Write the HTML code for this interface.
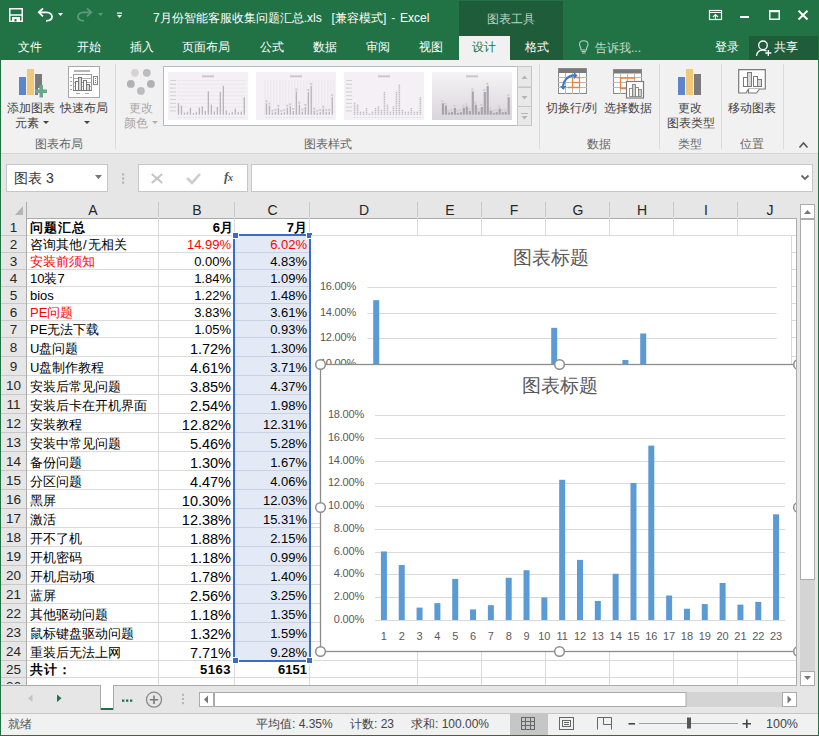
<!DOCTYPE html><html><head><meta charset="utf-8"><style>
html,body{margin:0;padding:0;}
body{width:819px;height:736px;overflow:hidden;position:relative;background:#e6e6e6;font-family:"Liberation Sans",sans-serif;}
div,svg{position:absolute;box-sizing:border-box;}
.t{white-space:nowrap;line-height:1;}
</style></head><body>
<div style="left:0px;top:0px;width:819px;height:60px;background:#217346"></div>
<div style="left:459px;top:1px;width:104px;height:59px;background:#1e5c3a"></div>
<div class="t" style="left:487px;top:12.5px;color:#b9d3c3;font-size:12px;">图表工具</div>
<div class="t" style="left:153px;top:12px;color:#fff;font-size:12px;word-spacing:1.6px;">7月份智能客服收集问题汇总.xls&nbsp;&nbsp;[兼容模式] - Excel</div>
<div class="t" style="left:18px;top:41px;color:#fff;font-size:12px;">文件</div>
<div class="t" style="left:77px;top:41px;color:#fff;font-size:12px;">开始</div>
<div class="t" style="left:130px;top:41px;color:#fff;font-size:12px;">插入</div>
<div class="t" style="left:182px;top:41px;color:#fff;font-size:12px;">页面布局</div>
<div class="t" style="left:260px;top:41px;color:#fff;font-size:12px;">公式</div>
<div class="t" style="left:313px;top:41px;color:#fff;font-size:12px;">数据</div>
<div class="t" style="left:366px;top:41px;color:#fff;font-size:12px;">审阅</div>
<div class="t" style="left:419px;top:41px;color:#fff;font-size:12px;">视图</div>
<div style="left:459px;top:36px;width:51px;height:24px;background:#f1f1f1"></div>
<div class="t" style="left:472px;top:41px;color:#217346;font-size:12px;">设计</div>
<div class="t" style="left:525px;top:41px;color:#fff;font-size:12px;">格式</div>
<div class="t" style="left:595px;top:41.5px;color:#c5dccd;font-size:12px;">告诉我...</div>
<div class="t" style="left:715px;top:41px;color:#fff;font-size:12px;">登录</div>
<div style="left:749px;top:36px;width:69px;height:24px;background:#1e5c3a"></div>
<div class="t" style="left:774px;top:41px;color:#fff;font-size:12px;">共享</div>
<svg style="left:0;top:0" width="819" height="60"><path d="M9.75 8.75 H22.25 V21.25 H9.75 Z" fill="none" stroke="#fff" stroke-width="1.5"/><line x1="9" x2="23" y1="15" y2="15" stroke="#fff" stroke-width="1.5"/><rect x="12" y="17" width="8" height="4.5" fill="#fff"/><rect x="14.5" y="19" width="2" height="2.5" fill="#217346"/><path d="M39 12.3 H46.5 C50 12.3 52 14.5 52 16.8 C52 19.3 49.8 20.8 46 20.8" fill="none" stroke="#fff" stroke-width="1.8"/><polyline points="43,8.3 38.8,12.3 43,16.3" fill="none" stroke="#fff" stroke-width="1.8"/><polygon points="58,13 63,13 60.5,16" fill="#fff"/><path d="M91 12.3 H83.5 C80 12.3 78 14.5 78 16.8 C78 19.3 80.2 20.8 84 20.8" fill="none" stroke="#5f9a78" stroke-width="1.8"/><polyline points="87,8.3 91.2,12.3 87,16.3" fill="none" stroke="#5f9a78" stroke-width="1.8"/><polygon points="98,13 103,13 100.5,16" fill="#5f9a78"/><rect x="117" y="12.5" width="5" height="1.2" fill="#fff"/><polygon points="117,15 122,15 119.5,18" fill="#fff"/><rect x="709.5" y="10.5" width="12" height="9" fill="none" stroke="#fff" stroke-width="1.2"/><line x1="709.5" x2="721.5" y1="12.5" y2="12.5" stroke="#fff" stroke-width="1"/><polyline points="713,17 715.5,14.5 718,17" fill="none" stroke="#fff" stroke-width="1.1"/><line x1="715.5" x2="715.5" y1="15" y2="19.5" stroke="#fff" stroke-width="1.1"/><rect x="740" y="16" width="9" height="2" fill="#fff"/><rect x="769.75" y="10.75" width="9.5" height="8.5" fill="none" stroke="#fff" stroke-width="1.5"/><rect x="769" y="10" width="11" height="2.2" fill="#fff"/><path d="M798.5 10.8 L807.5 19.5 M807.5 10.8 L798.5 19.5" stroke="#fff" stroke-width="1.9"/><path d="M581 50 C581 47 579.5 46 579.5 44.5 C579.5 42 581.5 40.8 583.7 40.8 C586 40.8 588 42 588 44.5 C588 46 586.5 47 586.5 50 Z" fill="none" stroke="#b4cfbf" stroke-width="1.1"/><rect x="581.5" y="51" width="4.5" height="1" fill="#b4cfbf"/><rect x="582" y="52.5" width="3.5" height="1" fill="#b4cfbf"/><circle cx="763" cy="45.3" r="4.3" fill="none" stroke="#fff" stroke-width="1.3"/><path d="M756.5 56 C757 51.5 759.5 50 763 50 C764.5 50 765.5 50.3 766.5 50.8" fill="none" stroke="#fff" stroke-width="1.3"/><path d="M768.3 50 V56 M765.3 53 H771.3" stroke="#fff" stroke-width="1.3"/></svg>
<div style="left:1px;top:60px;width:817px;height:94px;background:#f1f1f1;border-bottom:1px solid #d5d5d5"></div>
<div class="t" style="left:7px;top:102px;font-size:12px;color:#444444;">添加图表</div>
<div class="t" style="left:15px;top:117px;font-size:12px;color:#444444;">元素</div>
<div class="t" style="left:60px;top:102px;font-size:12px;color:#444444;">快速布局</div>
<div class="t" style="left:34.5px;top:137.5px;font-size:12px;color:#666666;">图表布局</div>
<div class="t" style="left:129px;top:102px;font-size:12px;color:#a8a8a8;">更改</div>
<div class="t" style="left:124px;top:117px;font-size:12px;color:#a8a8a8;">颜色</div>
<div class="t" style="left:303.5px;top:137.5px;font-size:12px;color:#666666;">图表样式</div>
<div class="t" style="left:546px;top:102px;font-size:12px;color:#444444;">切换行/列</div>
<div class="t" style="left:604px;top:102px;font-size:12px;color:#444444;">选择数据</div>
<div class="t" style="left:587px;top:137.5px;font-size:12px;color:#666666;">数据</div>
<div class="t" style="left:678px;top:102px;font-size:12px;color:#444444;">更改</div>
<div class="t" style="left:667px;top:117px;font-size:12px;color:#444444;">图表类型</div>
<div class="t" style="left:678px;top:137.5px;font-size:12px;color:#666666;">类型</div>
<div class="t" style="left:728px;top:102px;font-size:12px;color:#444444;">移动图表</div>
<div class="t" style="left:740px;top:137.5px;font-size:12px;color:#666666;">位置</div>
<svg style="left:0;top:0" width="819" height="160"><line x1="115.5" x2="115.5" y1="64" y2="149" stroke="#dadada" stroke-width="1"/><line x1="539.5" x2="539.5" y1="64" y2="149" stroke="#dadada" stroke-width="1"/><line x1="659.5" x2="659.5" y1="64" y2="149" stroke="#dadada" stroke-width="1"/><line x1="721.5" x2="721.5" y1="64" y2="149" stroke="#dadada" stroke-width="1"/><line x1="783.5" x2="783.5" y1="64" y2="149" stroke="#dadada" stroke-width="1"/><polygon points="43,121 49,121 46,124" fill="#444"/><polygon points="84,121 90,121 87,124" fill="#444"/><polygon points="152,121 158,121 155,124" fill="#b0b0b0"/><rect x="19" y="77" width="7" height="18" fill="#4472c4" opacity="0.85"/><rect x="27" y="69" width="7" height="26" fill="#f0c87a"/><rect x="35" y="74" width="7" height="14" fill="#7a7a7a"/><rect x="35" y="88" width="3" height="7" fill="#7a7a7a"/><rect x="39.5" y="85" width="3.5" height="12.5" fill="#6aa68e"/><rect x="35" y="89.5" width="12" height="3.5" fill="#6aa68e"/><rect x="68.5" y="66.5" width="31" height="31" fill="#fff" stroke="#a8a8a8"/><rect x="74" y="70" width="16" height="2" fill="#b4b4b4"/><rect x="73.5" y="74.5" width="18" height="16" fill="none" stroke="#9a9a9a"/><line x1="73.5" x2="91.5" y1="78.5" y2="78.5" stroke="#b0b0b0"/><line x1="73.5" x2="91.5" y1="82.5" y2="82.5" stroke="#b0b0b0"/><line x1="73.5" x2="91.5" y1="86.5" y2="86.5" stroke="#b0b0b0"/><rect x="75.5" y="81.5" width="3" height="9" fill="#fff" stroke="#777"/><rect x="78.5" y="77.5" width="3" height="13" fill="#d8d8d8" stroke="#777"/><rect x="83.5" y="80.5" width="3" height="10" fill="#fff" stroke="#777"/><rect x="86.5" y="84.5" width="3" height="6" fill="#d8d8d8" stroke="#777"/><line x1="73" x2="92" y1="90.5" y2="90.5" stroke="#777"/><rect x="93.5" y="76.5" width="4" height="8" fill="#fff" stroke="#888"/><rect x="95" y="78.0" width="1" height="1" fill="#777"/><rect x="95" y="80.0" width="1" height="1" fill="#777"/><rect x="95" y="82.0" width="1" height="1" fill="#777"/><line x1="70" x2="72" y1="77.5" y2="77.5" stroke="#aaa"/><line x1="70" x2="72" y1="81.5" y2="81.5" stroke="#aaa"/><line x1="70" x2="72" y1="85.5" y2="85.5" stroke="#aaa"/><line x1="70" x2="72" y1="89.5" y2="89.5" stroke="#aaa"/><line x1="76" x2="80" y1="93.5" y2="93.5" stroke="#aaa"/><line x1="85" x2="89" y1="93.5" y2="93.5" stroke="#aaa"/><circle cx="135" cy="72.8" r="3.9" fill="#d6d2d6"/><circle cx="146.8" cy="72.8" r="3.9" fill="#bdbbbf"/><circle cx="130.8" cy="83.9" r="3.9" fill="#b1b1b3"/><circle cx="150.9" cy="83.9" r="3.9" fill="#b1b1b3"/><circle cx="140.9" cy="90.9" r="3.9" fill="#bdbbbf"/><rect x="163.5" y="66.5" width="354" height="59" fill="#fff" stroke="#b3bcc3"/><rect x="168" y="72" width="80" height="48" fill="#f4f0f5"/><rect x="202" y="75.3" width="12" height="2" fill="#c9c6cc"/><line x1="177" x2="246" y1="80.5" y2="80.5" stroke="#e8e3ea" stroke-width="0.6"/><rect x="170" y="80.0" width="6" height="1" fill="#d3cfd6"/><line x1="177" x2="246" y1="84.3" y2="84.3" stroke="#e8e3ea" stroke-width="0.6"/><rect x="170" y="83.8" width="6" height="1" fill="#d3cfd6"/><line x1="177" x2="246" y1="88.1" y2="88.1" stroke="#e8e3ea" stroke-width="0.6"/><rect x="170" y="87.6" width="6" height="1" fill="#d3cfd6"/><line x1="177" x2="246" y1="91.9" y2="91.9" stroke="#e8e3ea" stroke-width="0.6"/><rect x="170" y="91.4" width="6" height="1" fill="#d3cfd6"/><line x1="177" x2="246" y1="95.7" y2="95.7" stroke="#e8e3ea" stroke-width="0.6"/><rect x="170" y="95.2" width="6" height="1" fill="#d3cfd6"/><line x1="177" x2="246" y1="99.5" y2="99.5" stroke="#e8e3ea" stroke-width="0.6"/><rect x="170" y="99.0" width="6" height="1" fill="#d3cfd6"/><line x1="177" x2="246" y1="103.3" y2="103.3" stroke="#e8e3ea" stroke-width="0.6"/><rect x="170" y="102.8" width="6" height="1" fill="#d3cfd6"/><line x1="177" x2="246" y1="107.1" y2="107.1" stroke="#e8e3ea" stroke-width="0.6"/><rect x="170" y="106.6" width="6" height="1" fill="#d3cfd6"/><line x1="177" x2="246" y1="110.9" y2="110.9" stroke="#e8e3ea" stroke-width="0.6"/><rect x="170" y="110.4" width="6" height="1" fill="#d3cfd6"/><rect x="177.8" y="103.3" width="1.3" height="11.4" fill="#b8b4ba"/><rect x="177.8" y="117" width="1" height="1" fill="#d6d2d8"/><rect x="180.8" y="105.6" width="1.3" height="9.1" fill="#b8b4ba"/><rect x="180.8" y="117" width="1" height="1" fill="#d6d2d8"/><rect x="183.8" y="112.6" width="1.3" height="2.1" fill="#b8b4ba"/><rect x="183.8" y="117" width="1" height="1" fill="#d6d2d8"/><rect x="186.8" y="111.9" width="1.3" height="2.8" fill="#b8b4ba"/><rect x="186.8" y="117" width="1" height="1" fill="#d6d2d8"/><rect x="189.8" y="107.9" width="1.3" height="6.8" fill="#b8b4ba"/><rect x="189.8" y="117" width="1" height="1" fill="#d6d2d8"/><rect x="192.8" y="112.9" width="1.3" height="1.8" fill="#b8b4ba"/><rect x="192.8" y="117" width="1" height="1" fill="#d6d2d8"/><rect x="195.7" y="112.2" width="1.3" height="2.5" fill="#b8b4ba"/><rect x="195.7" y="117" width="1" height="1" fill="#d6d2d8"/><rect x="198.7" y="107.7" width="1.3" height="7.0" fill="#b8b4ba"/><rect x="198.7" y="117" width="1" height="1" fill="#d6d2d8"/><rect x="201.7" y="106.4" width="1.3" height="8.3" fill="#b8b4ba"/><rect x="201.7" y="117" width="1" height="1" fill="#d6d2d8"/><rect x="204.7" y="111.0" width="1.3" height="3.7" fill="#b8b4ba"/><rect x="204.7" y="117" width="1" height="1" fill="#d6d2d8"/><rect x="207.7" y="91.4" width="1.3" height="23.3" fill="#b8b4ba"/><rect x="207.7" y="117" width="1" height="1" fill="#d6d2d8"/><rect x="210.7" y="104.7" width="1.3" height="10.0" fill="#b8b4ba"/><rect x="210.7" y="117" width="1" height="1" fill="#d6d2d8"/><rect x="213.7" y="111.5" width="1.3" height="3.2" fill="#b8b4ba"/><rect x="213.7" y="117" width="1" height="1" fill="#d6d2d8"/><rect x="216.7" y="107.0" width="1.3" height="7.7" fill="#b8b4ba"/><rect x="216.7" y="117" width="1" height="1" fill="#d6d2d8"/><rect x="219.7" y="92.0" width="1.3" height="22.7" fill="#b8b4ba"/><rect x="219.7" y="117" width="1" height="1" fill="#d6d2d8"/><rect x="222.7" y="85.8" width="1.3" height="28.9" fill="#b8b4ba"/><rect x="222.7" y="117" width="1" height="1" fill="#d6d2d8"/><rect x="225.6" y="110.6" width="1.3" height="4.1" fill="#b8b4ba"/><rect x="225.6" y="117" width="1" height="1" fill="#d6d2d8"/><rect x="228.6" y="112.8" width="1.3" height="1.9" fill="#b8b4ba"/><rect x="228.6" y="117" width="1" height="1" fill="#d6d2d8"/><rect x="231.6" y="112.1" width="1.3" height="2.6" fill="#b8b4ba"/><rect x="231.6" y="117" width="1" height="1" fill="#d6d2d8"/><rect x="234.6" y="108.6" width="1.3" height="6.1" fill="#b8b4ba"/><rect x="234.6" y="117" width="1" height="1" fill="#d6d2d8"/><rect x="237.6" y="112.1" width="1.3" height="2.6" fill="#b8b4ba"/><rect x="237.6" y="117" width="1" height="1" fill="#d6d2d8"/><rect x="240.6" y="111.7" width="1.3" height="3.0" fill="#b8b4ba"/><rect x="240.6" y="117" width="1" height="1" fill="#d6d2d8"/><rect x="243.6" y="97.2" width="1.3" height="17.5" fill="#b8b4ba"/><rect x="243.6" y="117" width="1" height="1" fill="#d6d2d8"/><rect x="256" y="72" width="80" height="48" fill="#f4f0f5"/><rect x="290" y="75.3" width="12" height="2" fill="#c9c6cc"/><line x1="264.9" x2="264.9" y1="80" y2="115" stroke="#e6e1e8" stroke-width="0.6"/><line x1="267.9" x2="267.9" y1="80" y2="115" stroke="#e6e1e8" stroke-width="0.6"/><line x1="270.9" x2="270.9" y1="80" y2="115" stroke="#e6e1e8" stroke-width="0.6"/><line x1="273.9" x2="273.9" y1="80" y2="115" stroke="#e6e1e8" stroke-width="0.6"/><line x1="276.9" x2="276.9" y1="80" y2="115" stroke="#e6e1e8" stroke-width="0.6"/><line x1="279.9" x2="279.9" y1="80" y2="115" stroke="#e6e1e8" stroke-width="0.6"/><line x1="282.9" x2="282.9" y1="80" y2="115" stroke="#e6e1e8" stroke-width="0.6"/><line x1="285.9" x2="285.9" y1="80" y2="115" stroke="#e6e1e8" stroke-width="0.6"/><line x1="288.9" x2="288.9" y1="80" y2="115" stroke="#e6e1e8" stroke-width="0.6"/><line x1="291.9" x2="291.9" y1="80" y2="115" stroke="#e6e1e8" stroke-width="0.6"/><line x1="294.9" x2="294.9" y1="80" y2="115" stroke="#e6e1e8" stroke-width="0.6"/><line x1="297.9" x2="297.9" y1="80" y2="115" stroke="#e6e1e8" stroke-width="0.6"/><line x1="300.9" x2="300.9" y1="80" y2="115" stroke="#e6e1e8" stroke-width="0.6"/><line x1="303.9" x2="303.9" y1="80" y2="115" stroke="#e6e1e8" stroke-width="0.6"/><line x1="306.9" x2="306.9" y1="80" y2="115" stroke="#e6e1e8" stroke-width="0.6"/><line x1="309.9" x2="309.9" y1="80" y2="115" stroke="#e6e1e8" stroke-width="0.6"/><line x1="312.9" x2="312.9" y1="80" y2="115" stroke="#e6e1e8" stroke-width="0.6"/><line x1="315.9" x2="315.9" y1="80" y2="115" stroke="#e6e1e8" stroke-width="0.6"/><line x1="318.9" x2="318.9" y1="80" y2="115" stroke="#e6e1e8" stroke-width="0.6"/><line x1="321.9" x2="321.9" y1="80" y2="115" stroke="#e6e1e8" stroke-width="0.6"/><line x1="324.9" x2="324.9" y1="80" y2="115" stroke="#e6e1e8" stroke-width="0.6"/><line x1="327.9" x2="327.9" y1="80" y2="115" stroke="#e6e1e8" stroke-width="0.6"/><line x1="330.9" x2="330.9" y1="80" y2="115" stroke="#e6e1e8" stroke-width="0.6"/><line x1="333.9" x2="333.9" y1="80" y2="115" stroke="#e6e1e8" stroke-width="0.6"/><rect x="265.8" y="103.3" width="1.3" height="11.4" fill="#b8b4ba"/><rect x="265.4" y="100.3" width="2" height="2" fill="#cfcbd2"/><rect x="265.8" y="117" width="1" height="1" fill="#d6d2d8"/><rect x="268.8" y="105.6" width="1.3" height="9.1" fill="#b8b4ba"/><rect x="268.4" y="102.6" width="2" height="2" fill="#cfcbd2"/><rect x="268.8" y="117" width="1" height="1" fill="#d6d2d8"/><rect x="271.8" y="112.6" width="1.3" height="2.1" fill="#b8b4ba"/><rect x="271.4" y="109.6" width="2" height="2" fill="#cfcbd2"/><rect x="271.8" y="117" width="1" height="1" fill="#d6d2d8"/><rect x="274.8" y="111.9" width="1.3" height="2.8" fill="#b8b4ba"/><rect x="274.4" y="108.9" width="2" height="2" fill="#cfcbd2"/><rect x="274.8" y="117" width="1" height="1" fill="#d6d2d8"/><rect x="277.8" y="107.9" width="1.3" height="6.8" fill="#b8b4ba"/><rect x="277.4" y="104.9" width="2" height="2" fill="#cfcbd2"/><rect x="277.8" y="117" width="1" height="1" fill="#d6d2d8"/><rect x="280.7" y="112.9" width="1.3" height="1.8" fill="#b8b4ba"/><rect x="280.3" y="109.9" width="2" height="2" fill="#cfcbd2"/><rect x="280.7" y="117" width="1" height="1" fill="#d6d2d8"/><rect x="283.7" y="112.2" width="1.3" height="2.5" fill="#b8b4ba"/><rect x="283.3" y="109.2" width="2" height="2" fill="#cfcbd2"/><rect x="283.7" y="117" width="1" height="1" fill="#d6d2d8"/><rect x="286.7" y="107.7" width="1.3" height="7.0" fill="#b8b4ba"/><rect x="286.3" y="104.7" width="2" height="2" fill="#cfcbd2"/><rect x="286.7" y="117" width="1" height="1" fill="#d6d2d8"/><rect x="289.7" y="106.4" width="1.3" height="8.3" fill="#b8b4ba"/><rect x="289.3" y="103.4" width="2" height="2" fill="#cfcbd2"/><rect x="289.7" y="117" width="1" height="1" fill="#d6d2d8"/><rect x="292.7" y="111.0" width="1.3" height="3.7" fill="#b8b4ba"/><rect x="292.3" y="108.0" width="2" height="2" fill="#cfcbd2"/><rect x="292.7" y="117" width="1" height="1" fill="#d6d2d8"/><rect x="295.7" y="91.4" width="1.3" height="23.3" fill="#b8b4ba"/><rect x="295.3" y="88.4" width="2" height="2" fill="#cfcbd2"/><rect x="295.7" y="117" width="1" height="1" fill="#d6d2d8"/><rect x="298.7" y="104.7" width="1.3" height="10.0" fill="#b8b4ba"/><rect x="298.3" y="101.7" width="2" height="2" fill="#cfcbd2"/><rect x="298.7" y="117" width="1" height="1" fill="#d6d2d8"/><rect x="301.7" y="111.5" width="1.3" height="3.2" fill="#b8b4ba"/><rect x="301.3" y="108.5" width="2" height="2" fill="#cfcbd2"/><rect x="301.7" y="117" width="1" height="1" fill="#d6d2d8"/><rect x="304.7" y="107.0" width="1.3" height="7.7" fill="#b8b4ba"/><rect x="304.3" y="104.0" width="2" height="2" fill="#cfcbd2"/><rect x="304.7" y="117" width="1" height="1" fill="#d6d2d8"/><rect x="307.7" y="92.0" width="1.3" height="22.7" fill="#b8b4ba"/><rect x="307.3" y="89.0" width="2" height="2" fill="#cfcbd2"/><rect x="307.7" y="117" width="1" height="1" fill="#d6d2d8"/><rect x="310.6" y="85.8" width="1.3" height="28.9" fill="#b8b4ba"/><rect x="310.2" y="82.8" width="2" height="2" fill="#cfcbd2"/><rect x="310.6" y="117" width="1" height="1" fill="#d6d2d8"/><rect x="313.6" y="110.6" width="1.3" height="4.1" fill="#b8b4ba"/><rect x="313.2" y="107.6" width="2" height="2" fill="#cfcbd2"/><rect x="313.6" y="117" width="1" height="1" fill="#d6d2d8"/><rect x="316.6" y="112.8" width="1.3" height="1.9" fill="#b8b4ba"/><rect x="316.2" y="109.8" width="2" height="2" fill="#cfcbd2"/><rect x="316.6" y="117" width="1" height="1" fill="#d6d2d8"/><rect x="319.6" y="112.1" width="1.3" height="2.6" fill="#b8b4ba"/><rect x="319.2" y="109.1" width="2" height="2" fill="#cfcbd2"/><rect x="319.6" y="117" width="1" height="1" fill="#d6d2d8"/><rect x="322.6" y="108.6" width="1.3" height="6.1" fill="#b8b4ba"/><rect x="322.2" y="105.6" width="2" height="2" fill="#cfcbd2"/><rect x="322.6" y="117" width="1" height="1" fill="#d6d2d8"/><rect x="325.6" y="112.1" width="1.3" height="2.6" fill="#b8b4ba"/><rect x="325.2" y="109.1" width="2" height="2" fill="#cfcbd2"/><rect x="325.6" y="117" width="1" height="1" fill="#d6d2d8"/><rect x="328.6" y="111.7" width="1.3" height="3.0" fill="#b8b4ba"/><rect x="328.2" y="108.7" width="2" height="2" fill="#cfcbd2"/><rect x="328.6" y="117" width="1" height="1" fill="#d6d2d8"/><rect x="331.6" y="97.2" width="1.3" height="17.5" fill="#b8b4ba"/><rect x="331.2" y="94.2" width="2" height="2" fill="#cfcbd2"/><rect x="331.6" y="117" width="1" height="1" fill="#d6d2d8"/><rect x="344" y="72" width="80" height="48" fill="#f4f0f5"/><rect x="378" y="75.3" width="12" height="2" fill="#c9c6cc"/><rect x="346" y="80.0" width="6" height="1" fill="#d3cfd6"/><rect x="346" y="83.8" width="6" height="1" fill="#d3cfd6"/><rect x="346" y="87.6" width="6" height="1" fill="#d3cfd6"/><rect x="346" y="91.4" width="6" height="1" fill="#d3cfd6"/><rect x="346" y="95.2" width="6" height="1" fill="#d3cfd6"/><rect x="346" y="99.0" width="6" height="1" fill="#d3cfd6"/><rect x="346" y="102.8" width="6" height="1" fill="#d3cfd6"/><rect x="346" y="106.6" width="6" height="1" fill="#d3cfd6"/><rect x="346" y="110.4" width="6" height="1" fill="#d3cfd6"/><rect x="353.8" y="113.5" width="1.5" height="1.2" fill="#bdb9bf"/><rect x="353.8" y="111.7" width="1.5" height="1.2" fill="#bdb9bf"/><rect x="353.8" y="109.9" width="1.5" height="1.2" fill="#bdb9bf"/><rect x="353.8" y="108.1" width="1.5" height="1.2" fill="#bdb9bf"/><rect x="353.8" y="106.3" width="1.5" height="1.2" fill="#bdb9bf"/><rect x="353.8" y="104.5" width="1.5" height="1.2" fill="#bdb9bf"/><rect x="353.8" y="102.7" width="1.5" height="1.2" fill="#bdb9bf"/><rect x="353.8" y="117" width="1" height="1" fill="#d6d2d8"/><rect x="356.8" y="113.5" width="1.5" height="1.2" fill="#bdb9bf"/><rect x="356.8" y="111.7" width="1.5" height="1.2" fill="#bdb9bf"/><rect x="356.8" y="109.9" width="1.5" height="1.2" fill="#bdb9bf"/><rect x="356.8" y="108.1" width="1.5" height="1.2" fill="#bdb9bf"/><rect x="356.8" y="106.3" width="1.5" height="1.2" fill="#bdb9bf"/><rect x="356.8" y="104.5" width="1.5" height="1.2" fill="#bdb9bf"/><rect x="356.8" y="117" width="1" height="1" fill="#d6d2d8"/><rect x="359.8" y="113.5" width="1.5" height="1.2" fill="#bdb9bf"/><rect x="359.8" y="111.7" width="1.5" height="1.2" fill="#bdb9bf"/><rect x="359.8" y="117" width="1" height="1" fill="#d6d2d8"/><rect x="362.8" y="113.5" width="1.5" height="1.2" fill="#bdb9bf"/><rect x="362.8" y="111.7" width="1.5" height="1.2" fill="#bdb9bf"/><rect x="362.8" y="117" width="1" height="1" fill="#d6d2d8"/><rect x="365.8" y="113.5" width="1.5" height="1.2" fill="#bdb9bf"/><rect x="365.8" y="111.7" width="1.5" height="1.2" fill="#bdb9bf"/><rect x="365.8" y="109.9" width="1.5" height="1.2" fill="#bdb9bf"/><rect x="365.8" y="108.1" width="1.5" height="1.2" fill="#bdb9bf"/><rect x="365.8" y="117" width="1" height="1" fill="#d6d2d8"/><rect x="368.7" y="113.5" width="1.5" height="1.2" fill="#bdb9bf"/><rect x="368.7" y="117" width="1" height="1" fill="#d6d2d8"/><rect x="371.7" y="113.5" width="1.5" height="1.2" fill="#bdb9bf"/><rect x="371.7" y="111.7" width="1.5" height="1.2" fill="#bdb9bf"/><rect x="371.7" y="117" width="1" height="1" fill="#d6d2d8"/><rect x="374.7" y="113.5" width="1.5" height="1.2" fill="#bdb9bf"/><rect x="374.7" y="111.7" width="1.5" height="1.2" fill="#bdb9bf"/><rect x="374.7" y="109.9" width="1.5" height="1.2" fill="#bdb9bf"/><rect x="374.7" y="108.1" width="1.5" height="1.2" fill="#bdb9bf"/><rect x="374.7" y="117" width="1" height="1" fill="#d6d2d8"/><rect x="377.7" y="113.5" width="1.5" height="1.2" fill="#bdb9bf"/><rect x="377.7" y="111.7" width="1.5" height="1.2" fill="#bdb9bf"/><rect x="377.7" y="109.9" width="1.5" height="1.2" fill="#bdb9bf"/><rect x="377.7" y="108.1" width="1.5" height="1.2" fill="#bdb9bf"/><rect x="377.7" y="106.3" width="1.5" height="1.2" fill="#bdb9bf"/><rect x="377.7" y="117" width="1" height="1" fill="#d6d2d8"/><rect x="380.7" y="113.5" width="1.5" height="1.2" fill="#bdb9bf"/><rect x="380.7" y="111.7" width="1.5" height="1.2" fill="#bdb9bf"/><rect x="380.7" y="109.9" width="1.5" height="1.2" fill="#bdb9bf"/><rect x="380.7" y="117" width="1" height="1" fill="#d6d2d8"/><rect x="383.7" y="113.5" width="1.5" height="1.2" fill="#bdb9bf"/><rect x="383.7" y="111.7" width="1.5" height="1.2" fill="#bdb9bf"/><rect x="383.7" y="109.9" width="1.5" height="1.2" fill="#bdb9bf"/><rect x="383.7" y="108.1" width="1.5" height="1.2" fill="#bdb9bf"/><rect x="383.7" y="106.3" width="1.5" height="1.2" fill="#bdb9bf"/><rect x="383.7" y="104.5" width="1.5" height="1.2" fill="#bdb9bf"/><rect x="383.7" y="102.7" width="1.5" height="1.2" fill="#bdb9bf"/><rect x="383.7" y="100.9" width="1.5" height="1.2" fill="#bdb9bf"/><rect x="383.7" y="99.1" width="1.5" height="1.2" fill="#bdb9bf"/><rect x="383.7" y="97.3" width="1.5" height="1.2" fill="#bdb9bf"/><rect x="383.7" y="95.5" width="1.5" height="1.2" fill="#bdb9bf"/><rect x="383.7" y="93.7" width="1.5" height="1.2" fill="#bdb9bf"/><rect x="383.7" y="91.9" width="1.5" height="1.2" fill="#bdb9bf"/><rect x="383.7" y="117" width="1" height="1" fill="#d6d2d8"/><rect x="386.7" y="113.5" width="1.5" height="1.2" fill="#bdb9bf"/><rect x="386.7" y="111.7" width="1.5" height="1.2" fill="#bdb9bf"/><rect x="386.7" y="109.9" width="1.5" height="1.2" fill="#bdb9bf"/><rect x="386.7" y="108.1" width="1.5" height="1.2" fill="#bdb9bf"/><rect x="386.7" y="106.3" width="1.5" height="1.2" fill="#bdb9bf"/><rect x="386.7" y="104.5" width="1.5" height="1.2" fill="#bdb9bf"/><rect x="386.7" y="117" width="1" height="1" fill="#d6d2d8"/><rect x="389.7" y="113.5" width="1.5" height="1.2" fill="#bdb9bf"/><rect x="389.7" y="111.7" width="1.5" height="1.2" fill="#bdb9bf"/><rect x="389.7" y="117" width="1" height="1" fill="#d6d2d8"/><rect x="392.7" y="113.5" width="1.5" height="1.2" fill="#bdb9bf"/><rect x="392.7" y="111.7" width="1.5" height="1.2" fill="#bdb9bf"/><rect x="392.7" y="109.9" width="1.5" height="1.2" fill="#bdb9bf"/><rect x="392.7" y="108.1" width="1.5" height="1.2" fill="#bdb9bf"/><rect x="392.7" y="106.3" width="1.5" height="1.2" fill="#bdb9bf"/><rect x="392.7" y="117" width="1" height="1" fill="#d6d2d8"/><rect x="395.7" y="113.5" width="1.5" height="1.2" fill="#bdb9bf"/><rect x="395.7" y="111.7" width="1.5" height="1.2" fill="#bdb9bf"/><rect x="395.7" y="109.9" width="1.5" height="1.2" fill="#bdb9bf"/><rect x="395.7" y="108.1" width="1.5" height="1.2" fill="#bdb9bf"/><rect x="395.7" y="106.3" width="1.5" height="1.2" fill="#bdb9bf"/><rect x="395.7" y="104.5" width="1.5" height="1.2" fill="#bdb9bf"/><rect x="395.7" y="102.7" width="1.5" height="1.2" fill="#bdb9bf"/><rect x="395.7" y="100.9" width="1.5" height="1.2" fill="#bdb9bf"/><rect x="395.7" y="99.1" width="1.5" height="1.2" fill="#bdb9bf"/><rect x="395.7" y="97.3" width="1.5" height="1.2" fill="#bdb9bf"/><rect x="395.7" y="95.5" width="1.5" height="1.2" fill="#bdb9bf"/><rect x="395.7" y="93.7" width="1.5" height="1.2" fill="#bdb9bf"/><rect x="395.7" y="91.9" width="1.5" height="1.2" fill="#bdb9bf"/><rect x="395.7" y="117" width="1" height="1" fill="#d6d2d8"/><rect x="398.6" y="113.5" width="1.5" height="1.2" fill="#bdb9bf"/><rect x="398.6" y="111.7" width="1.5" height="1.2" fill="#bdb9bf"/><rect x="398.6" y="109.9" width="1.5" height="1.2" fill="#bdb9bf"/><rect x="398.6" y="108.1" width="1.5" height="1.2" fill="#bdb9bf"/><rect x="398.6" y="106.3" width="1.5" height="1.2" fill="#bdb9bf"/><rect x="398.6" y="104.5" width="1.5" height="1.2" fill="#bdb9bf"/><rect x="398.6" y="102.7" width="1.5" height="1.2" fill="#bdb9bf"/><rect x="398.6" y="100.9" width="1.5" height="1.2" fill="#bdb9bf"/><rect x="398.6" y="99.1" width="1.5" height="1.2" fill="#bdb9bf"/><rect x="398.6" y="97.3" width="1.5" height="1.2" fill="#bdb9bf"/><rect x="398.6" y="95.5" width="1.5" height="1.2" fill="#bdb9bf"/><rect x="398.6" y="93.7" width="1.5" height="1.2" fill="#bdb9bf"/><rect x="398.6" y="91.9" width="1.5" height="1.2" fill="#bdb9bf"/><rect x="398.6" y="90.1" width="1.5" height="1.2" fill="#bdb9bf"/><rect x="398.6" y="88.3" width="1.5" height="1.2" fill="#bdb9bf"/><rect x="398.6" y="86.5" width="1.5" height="1.2" fill="#bdb9bf"/><rect x="398.6" y="84.7" width="1.5" height="1.2" fill="#bdb9bf"/><rect x="398.6" y="117" width="1" height="1" fill="#d6d2d8"/><rect x="401.6" y="113.5" width="1.5" height="1.2" fill="#bdb9bf"/><rect x="401.6" y="111.7" width="1.5" height="1.2" fill="#bdb9bf"/><rect x="401.6" y="109.9" width="1.5" height="1.2" fill="#bdb9bf"/><rect x="401.6" y="117" width="1" height="1" fill="#d6d2d8"/><rect x="404.6" y="113.5" width="1.5" height="1.2" fill="#bdb9bf"/><rect x="404.6" y="111.7" width="1.5" height="1.2" fill="#bdb9bf"/><rect x="404.6" y="117" width="1" height="1" fill="#d6d2d8"/><rect x="407.6" y="113.5" width="1.5" height="1.2" fill="#bdb9bf"/><rect x="407.6" y="111.7" width="1.5" height="1.2" fill="#bdb9bf"/><rect x="407.6" y="117" width="1" height="1" fill="#d6d2d8"/><rect x="410.6" y="113.5" width="1.5" height="1.2" fill="#bdb9bf"/><rect x="410.6" y="111.7" width="1.5" height="1.2" fill="#bdb9bf"/><rect x="410.6" y="109.9" width="1.5" height="1.2" fill="#bdb9bf"/><rect x="410.6" y="108.1" width="1.5" height="1.2" fill="#bdb9bf"/><rect x="410.6" y="117" width="1" height="1" fill="#d6d2d8"/><rect x="413.6" y="113.5" width="1.5" height="1.2" fill="#bdb9bf"/><rect x="413.6" y="111.7" width="1.5" height="1.2" fill="#bdb9bf"/><rect x="413.6" y="117" width="1" height="1" fill="#d6d2d8"/><rect x="416.6" y="113.5" width="1.5" height="1.2" fill="#bdb9bf"/><rect x="416.6" y="111.7" width="1.5" height="1.2" fill="#bdb9bf"/><rect x="416.6" y="117" width="1" height="1" fill="#d6d2d8"/><rect x="419.6" y="113.5" width="1.5" height="1.2" fill="#bdb9bf"/><rect x="419.6" y="111.7" width="1.5" height="1.2" fill="#bdb9bf"/><rect x="419.6" y="109.9" width="1.5" height="1.2" fill="#bdb9bf"/><rect x="419.6" y="108.1" width="1.5" height="1.2" fill="#bdb9bf"/><rect x="419.6" y="106.3" width="1.5" height="1.2" fill="#bdb9bf"/><rect x="419.6" y="104.5" width="1.5" height="1.2" fill="#bdb9bf"/><rect x="419.6" y="102.7" width="1.5" height="1.2" fill="#bdb9bf"/><rect x="419.6" y="100.9" width="1.5" height="1.2" fill="#bdb9bf"/><rect x="419.6" y="99.1" width="1.5" height="1.2" fill="#bdb9bf"/><rect x="419.6" y="97.3" width="1.5" height="1.2" fill="#bdb9bf"/><rect x="419.6" y="117" width="1" height="1" fill="#d6d2d8"/><defs><linearGradient id="gg" x1="0" y1="0" x2="0" y2="1"><stop offset="0" stop-color="#f6f3f7"/><stop offset="1" stop-color="#d9d5da"/></linearGradient></defs><rect x="432" y="72" width="80" height="48" fill="url(#gg)"/><rect x="466" y="75.3" width="12" height="2" fill="#c9c6cc"/><rect x="441.8" y="103.3" width="2.2" height="11.4" fill="#a9a5ab"/><rect x="441.4" y="100.3" width="2" height="2" fill="#cfcbd2"/><rect x="441.8" y="117" width="1" height="1" fill="#d6d2d8"/><rect x="444.8" y="105.6" width="2.2" height="9.1" fill="#a9a5ab"/><rect x="444.4" y="102.6" width="2" height="2" fill="#cfcbd2"/><rect x="444.8" y="117" width="1" height="1" fill="#d6d2d8"/><rect x="447.8" y="112.6" width="2.2" height="2.1" fill="#a9a5ab"/><rect x="447.4" y="109.6" width="2" height="2" fill="#cfcbd2"/><rect x="447.8" y="117" width="1" height="1" fill="#d6d2d8"/><rect x="450.8" y="111.9" width="2.2" height="2.8" fill="#a9a5ab"/><rect x="450.4" y="108.9" width="2" height="2" fill="#cfcbd2"/><rect x="450.8" y="117" width="1" height="1" fill="#d6d2d8"/><rect x="453.8" y="107.9" width="2.2" height="6.8" fill="#a9a5ab"/><rect x="453.4" y="104.9" width="2" height="2" fill="#cfcbd2"/><rect x="453.8" y="117" width="1" height="1" fill="#d6d2d8"/><rect x="456.7" y="112.9" width="2.2" height="1.8" fill="#a9a5ab"/><rect x="456.3" y="109.9" width="2" height="2" fill="#cfcbd2"/><rect x="456.7" y="117" width="1" height="1" fill="#d6d2d8"/><rect x="459.7" y="112.2" width="2.2" height="2.5" fill="#a9a5ab"/><rect x="459.3" y="109.2" width="2" height="2" fill="#cfcbd2"/><rect x="459.7" y="117" width="1" height="1" fill="#d6d2d8"/><rect x="462.7" y="107.7" width="2.2" height="7.0" fill="#a9a5ab"/><rect x="462.3" y="104.7" width="2" height="2" fill="#cfcbd2"/><rect x="462.7" y="117" width="1" height="1" fill="#d6d2d8"/><rect x="465.7" y="106.4" width="2.2" height="8.3" fill="#a9a5ab"/><rect x="465.3" y="103.4" width="2" height="2" fill="#cfcbd2"/><rect x="465.7" y="117" width="1" height="1" fill="#d6d2d8"/><rect x="468.7" y="111.0" width="2.2" height="3.7" fill="#a9a5ab"/><rect x="468.3" y="108.0" width="2" height="2" fill="#cfcbd2"/><rect x="468.7" y="117" width="1" height="1" fill="#d6d2d8"/><rect x="471.7" y="91.4" width="2.2" height="23.3" fill="#a9a5ab"/><rect x="471.3" y="88.4" width="2" height="2" fill="#cfcbd2"/><rect x="471.7" y="117" width="1" height="1" fill="#d6d2d8"/><rect x="474.7" y="104.7" width="2.2" height="10.0" fill="#a9a5ab"/><rect x="474.3" y="101.7" width="2" height="2" fill="#cfcbd2"/><rect x="474.7" y="117" width="1" height="1" fill="#d6d2d8"/><rect x="477.7" y="111.5" width="2.2" height="3.2" fill="#a9a5ab"/><rect x="477.3" y="108.5" width="2" height="2" fill="#cfcbd2"/><rect x="477.7" y="117" width="1" height="1" fill="#d6d2d8"/><rect x="480.7" y="107.0" width="2.2" height="7.7" fill="#a9a5ab"/><rect x="480.3" y="104.0" width="2" height="2" fill="#cfcbd2"/><rect x="480.7" y="117" width="1" height="1" fill="#d6d2d8"/><rect x="483.7" y="92.0" width="2.2" height="22.7" fill="#a9a5ab"/><rect x="483.3" y="89.0" width="2" height="2" fill="#cfcbd2"/><rect x="483.7" y="117" width="1" height="1" fill="#d6d2d8"/><rect x="486.6" y="85.8" width="2.2" height="28.9" fill="#a9a5ab"/><rect x="486.2" y="82.8" width="2" height="2" fill="#cfcbd2"/><rect x="486.6" y="117" width="1" height="1" fill="#d6d2d8"/><rect x="489.6" y="110.6" width="2.2" height="4.1" fill="#a9a5ab"/><rect x="489.2" y="107.6" width="2" height="2" fill="#cfcbd2"/><rect x="489.6" y="117" width="1" height="1" fill="#d6d2d8"/><rect x="492.6" y="112.8" width="2.2" height="1.9" fill="#a9a5ab"/><rect x="492.2" y="109.8" width="2" height="2" fill="#cfcbd2"/><rect x="492.6" y="117" width="1" height="1" fill="#d6d2d8"/><rect x="495.6" y="112.1" width="2.2" height="2.6" fill="#a9a5ab"/><rect x="495.2" y="109.1" width="2" height="2" fill="#cfcbd2"/><rect x="495.6" y="117" width="1" height="1" fill="#d6d2d8"/><rect x="498.6" y="108.6" width="2.2" height="6.1" fill="#a9a5ab"/><rect x="498.2" y="105.6" width="2" height="2" fill="#cfcbd2"/><rect x="498.6" y="117" width="1" height="1" fill="#d6d2d8"/><rect x="501.6" y="112.1" width="2.2" height="2.6" fill="#a9a5ab"/><rect x="501.2" y="109.1" width="2" height="2" fill="#cfcbd2"/><rect x="501.6" y="117" width="1" height="1" fill="#d6d2d8"/><rect x="504.6" y="111.7" width="2.2" height="3.0" fill="#a9a5ab"/><rect x="504.2" y="108.7" width="2" height="2" fill="#cfcbd2"/><rect x="504.6" y="117" width="1" height="1" fill="#d6d2d8"/><rect x="507.6" y="97.2" width="2.2" height="17.5" fill="#a9a5ab"/><rect x="507.2" y="94.2" width="2" height="2" fill="#cfcbd2"/><rect x="507.6" y="117" width="1" height="1" fill="#d6d2d8"/><rect x="517.5" y="66.5" width="14" height="20.5" fill="#e8e8e8" stroke="#c6c6c6"/><rect x="517.5" y="87.5" width="14" height="19" fill="#e8e8e8" stroke="#c6c6c6"/><rect x="517.5" y="106.5" width="14" height="19" fill="#e8e8e8" stroke="#c6c6c6"/><polygon points="521.5,79 527.5,79 524.5,75.5" fill="#b4b4b4"/><polygon points="521.5,96 527.5,96 524.5,99.5" fill="#b4b4b4"/><line x1="521" x2="528" y1="113.5" y2="113.5" stroke="#b4b4b4"/><polygon points="521.5,116 527.5,116 524.5,119.5" fill="#b4b4b4"/><rect x="558" y="68" width="29" height="26" fill="#fff"/><rect x="558" y="68" width="29" height="5" fill="#7a7a7a"/><rect x="558.5" y="68.5" width="28" height="25" fill="none" stroke="#8a8a8a"/><line x1="558" x2="587" y1="77.5" y2="77.5" stroke="#b8b8b8"/><line x1="558" x2="587" y1="82.5" y2="82.5" stroke="#b8b8b8"/><line x1="558" x2="587" y1="87.5" y2="87.5" stroke="#b8b8b8"/><line x1="565.5" x2="565.5" y1="73" y2="94" stroke="#b8b8b8"/><line x1="572.5" x2="572.5" y1="73" y2="94" stroke="#b8b8b8"/><line x1="579.5" x2="579.5" y1="73" y2="94" stroke="#b8b8b8"/><path d="M572.5 77.5 H579.5 V87.5 H568" fill="none" stroke="#e9843a" stroke-width="1.3"/><line x1="572.5" x2="579.5" y1="82.5" y2="82.5" stroke="#e9843a" stroke-width="1.3"/><line x1="572.5" x2="572.5" y1="77.5" y2="87.5" stroke="#e9843a" stroke-width="1.3"/><path d="M563 88 C563 80 569 75 575 75.5" fill="none" stroke="#3f7bc2" stroke-width="2.2"/><polygon points="574,72 577.5,75.5 574,79" fill="#3f7bc2"/><polygon points="560,86 566.5,86 563.2,90" fill="#3f7bc2"/><rect x="613" y="69" width="29" height="25" fill="#fff"/><rect x="613" y="69" width="29" height="4.5" fill="#7a7a7a"/><rect x="613.5" y="69.5" width="28" height="24" fill="none" stroke="#8a8a8a"/><line x1="613" x2="642" y1="77.5" y2="77.5" stroke="#b8b8b8"/><line x1="613" x2="642" y1="82.5" y2="82.5" stroke="#b8b8b8"/><line x1="613" x2="642" y1="87.5" y2="87.5" stroke="#b8b8b8"/><line x1="620.5" x2="620.5" y1="73" y2="94" stroke="#b8b8b8"/><line x1="627.5" x2="627.5" y1="73" y2="94" stroke="#b8b8b8"/><line x1="634.5" x2="634.5" y1="73" y2="94" stroke="#b8b8b8"/><path d="M634.5 79.5 V78 H620.5 V88.5 H627" fill="none" stroke="#e9843a" stroke-width="1.3"/><rect x="626.5" y="81.5" width="17" height="16.5" fill="#fff" stroke="#7a7a7a" stroke-width="1.2"/><rect x="629.5" y="88.5" width="3" height="8" fill="#fff" stroke="#7a7a7a" stroke-width="0.8"/><rect x="632.5" y="84.5" width="3" height="12" fill="#d0d0d0" stroke="#7a7a7a" stroke-width="0.8"/><rect x="635.5" y="87.5" width="3" height="9" fill="#fff" stroke="#7a7a7a" stroke-width="0.8"/><rect x="638.5" y="89.5" width="3" height="7" fill="#d0d0d0" stroke="#7a7a7a" stroke-width="0.8"/><rect x="678" y="77" width="7" height="18" fill="#4472c4" opacity="0.85"/><rect x="686" y="69" width="7" height="26" fill="#f0c87a"/><rect x="694" y="74" width="7" height="21" fill="#7a7a7a"/><path d="M738.7 69.7 H765.3 V89 H748.5 L746 93 H738.7 Z" fill="#fff" stroke="#7a7a7a" stroke-width="1.2"/><path d="M748.5 89 V93 H756.5 L759.5 89" fill="#fff" stroke="#7a7a7a" stroke-width="1.2"/><rect x="743.5" y="77.5" width="4" height="9" fill="#fff" stroke="#7a7a7a"/><rect x="747.5" y="72.5" width="4" height="14" fill="#d8d8d8" stroke="#7a7a7a"/><rect x="753.5" y="76.5" width="4" height="10" fill="#fff" stroke="#7a7a7a"/><rect x="757.5" y="79.5" width="4" height="7" fill="#d8d8d8" stroke="#7a7a7a"/><polyline points="799.5,147.5 803.5,143 807.5,147.5" fill="none" stroke="#555" stroke-width="1.6"/></svg>
<div style="left:6px;top:164px;width:102px;height:28px;background:#fff;border:1px solid #c6c6c6"></div>
<div style="left:138px;top:164px;width:110px;height:28px;background:#fff;border:1px solid #c6c6c6"></div>
<div style="left:251px;top:164px;width:562px;height:28px;background:#fff;border:1px solid #c6c6c6"></div>
<div class="t" style="left:14px;top:170.5px;font-size:14px;color:#333">图表 3</div>
<svg style="left:0;top:150px" width="819" height="55"><polygon points="95,25 102,25 98.5,29.2" fill="#777"/><rect x="122" y="23.3" width="2.2" height="2.2" fill="#b5b5b5"/><rect x="122" y="27.4" width="2.2" height="2.2" fill="#b5b5b5"/><rect x="122" y="31.5" width="2.2" height="2.2" fill="#b5b5b5"/><path d="M151.8 24 L162.2 33 M162.2 24 L151.8 33" stroke="#c4c4c4" stroke-width="2"/><polyline points="187,28 192,32.8 200,24" fill="none" stroke="#cdcdcd" stroke-width="2.6"/><text x="224" y="31" font-family="Liberation Serif, serif" font-style="italic" font-weight="bold" font-size="13" fill="#555">f</text><text x="228" y="31" font-family="Liberation Serif, serif" font-style="italic" font-weight="bold" font-size="10" fill="#555">x</text><polyline points="801.5,25.5 805,29 808.5,25.5" fill="none" stroke="#666" stroke-width="1.8"/></svg>
<div style="left:26px;top:218px;width:770px;height:467px;background:#fff"></div>
<div style="left:1px;top:202px;width:795px;height:16px;background:#e6e6e6"></div>
<div style="left:1px;top:218px;width:795px;height:1px;background:#ababab"></div>
<div style="left:26px;top:202px;width:1px;height:483px;background:#ababab"></div>
<div style="left:158px;top:202px;width:1px;height:15px;background:#c8c8c8"></div>
<div style="left:234px;top:202px;width:1px;height:15px;background:#c8c8c8"></div>
<div style="left:309px;top:202px;width:1px;height:15px;background:#c8c8c8"></div>
<div style="left:417px;top:202px;width:1px;height:15px;background:#c8c8c8"></div>
<div style="left:481px;top:202px;width:1px;height:15px;background:#c8c8c8"></div>
<div style="left:545px;top:202px;width:1px;height:15px;background:#c8c8c8"></div>
<div style="left:609px;top:202px;width:1px;height:15px;background:#c8c8c8"></div>
<div style="left:673px;top:202px;width:1px;height:15px;background:#c8c8c8"></div>
<div style="left:737px;top:202px;width:1px;height:15px;background:#c8c8c8"></div>
<div class="t" style="left:27px;top:203px;width:132px;text-align:center;font-size:14px;color:#262626">A</div>
<div class="t" style="left:159px;top:203px;width:76px;text-align:center;font-size:14px;color:#262626">B</div>
<div class="t" style="left:235px;top:203px;width:75px;text-align:center;font-size:14px;color:#262626">C</div>
<div class="t" style="left:310px;top:203px;width:108px;text-align:center;font-size:14px;color:#262626">D</div>
<div class="t" style="left:418px;top:203px;width:64px;text-align:center;font-size:14px;color:#262626">E</div>
<div class="t" style="left:482px;top:203px;width:64px;text-align:center;font-size:14px;color:#262626">F</div>
<div class="t" style="left:546px;top:203px;width:64px;text-align:center;font-size:14px;color:#262626">G</div>
<div class="t" style="left:610px;top:203px;width:64px;text-align:center;font-size:14px;color:#262626">H</div>
<div class="t" style="left:674px;top:203px;width:64px;text-align:center;font-size:14px;color:#262626">I</div>
<div class="t" style="left:738px;top:203px;width:64px;text-align:center;font-size:14px;color:#262626">J</div>
<svg style="left:9px;top:206px" width="14" height="11"><polygon points="14,0 14,9 6,9" fill="#b4b4b4"/></svg>
<div style="left:27px;top:235px;width:769px;height:1px;background:#dadada"></div>
<div style="left:27px;top:252px;width:769px;height:1px;background:#dadada"></div>
<div style="left:27px;top:269px;width:769px;height:1px;background:#dadada"></div>
<div style="left:27px;top:286px;width:769px;height:1px;background:#dadada"></div>
<div style="left:27px;top:303px;width:769px;height:1px;background:#dadada"></div>
<div style="left:27px;top:320px;width:769px;height:1px;background:#dadada"></div>
<div style="left:27px;top:337px;width:769px;height:1px;background:#dadada"></div>
<div style="left:27px;top:356px;width:769px;height:1px;background:#dadada"></div>
<div style="left:27px;top:375px;width:769px;height:1px;background:#dadada"></div>
<div style="left:27px;top:394px;width:769px;height:1px;background:#dadada"></div>
<div style="left:27px;top:413px;width:769px;height:1px;background:#dadada"></div>
<div style="left:27px;top:432px;width:769px;height:1px;background:#dadada"></div>
<div style="left:27px;top:451px;width:769px;height:1px;background:#dadada"></div>
<div style="left:27px;top:470px;width:769px;height:1px;background:#dadada"></div>
<div style="left:27px;top:489px;width:769px;height:1px;background:#dadada"></div>
<div style="left:27px;top:508px;width:769px;height:1px;background:#dadada"></div>
<div style="left:27px;top:527px;width:769px;height:1px;background:#dadada"></div>
<div style="left:27px;top:546px;width:769px;height:1px;background:#dadada"></div>
<div style="left:27px;top:565px;width:769px;height:1px;background:#dadada"></div>
<div style="left:27px;top:584px;width:769px;height:1px;background:#dadada"></div>
<div style="left:27px;top:603px;width:769px;height:1px;background:#dadada"></div>
<div style="left:27px;top:622px;width:769px;height:1px;background:#dadada"></div>
<div style="left:27px;top:641px;width:769px;height:1px;background:#dadada"></div>
<div style="left:27px;top:660px;width:769px;height:1px;background:#dadada"></div>
<div style="left:27px;top:677px;width:769px;height:1px;background:#dadada"></div>
<div style="left:158px;top:218px;width:1px;height:467px;background:#dadada"></div>
<div style="left:234px;top:218px;width:1px;height:467px;background:#dadada"></div>
<div style="left:309px;top:218px;width:1px;height:467px;background:#dadada"></div>
<div style="left:417px;top:218px;width:1px;height:467px;background:#dadada"></div>
<div style="left:481px;top:218px;width:1px;height:467px;background:#dadada"></div>
<div style="left:545px;top:218px;width:1px;height:467px;background:#dadada"></div>
<div style="left:609px;top:218px;width:1px;height:467px;background:#dadada"></div>
<div style="left:673px;top:218px;width:1px;height:467px;background:#dadada"></div>
<div style="left:737px;top:218px;width:1px;height:467px;background:#dadada"></div>
<div style="left:1px;top:218px;width:25px;height:467px;background:#e6e6e6"></div>
<div style="left:1px;top:235px;width:25px;height:1px;background:#c8c8c8"></div>
<div class="t" style="left:1px;top:221px;width:25px;text-align:center;font-size:13.5px;color:#262626">1</div>
<div style="left:1px;top:252px;width:25px;height:1px;background:#c8c8c8"></div>
<div class="t" style="left:1px;top:238px;width:25px;text-align:center;font-size:13.5px;color:#262626">2</div>
<div style="left:1px;top:269px;width:25px;height:1px;background:#c8c8c8"></div>
<div class="t" style="left:1px;top:255px;width:25px;text-align:center;font-size:13.5px;color:#262626">3</div>
<div style="left:1px;top:286px;width:25px;height:1px;background:#c8c8c8"></div>
<div class="t" style="left:1px;top:272px;width:25px;text-align:center;font-size:13.5px;color:#262626">4</div>
<div style="left:1px;top:303px;width:25px;height:1px;background:#c8c8c8"></div>
<div class="t" style="left:1px;top:289px;width:25px;text-align:center;font-size:13.5px;color:#262626">5</div>
<div style="left:1px;top:320px;width:25px;height:1px;background:#c8c8c8"></div>
<div class="t" style="left:1px;top:306px;width:25px;text-align:center;font-size:13.5px;color:#262626">6</div>
<div style="left:1px;top:337px;width:25px;height:1px;background:#c8c8c8"></div>
<div class="t" style="left:1px;top:323px;width:25px;text-align:center;font-size:13.5px;color:#262626">7</div>
<div style="left:1px;top:356px;width:25px;height:1px;background:#c8c8c8"></div>
<div class="t" style="left:1px;top:341px;width:25px;text-align:center;font-size:13.5px;color:#262626">8</div>
<div style="left:1px;top:375px;width:25px;height:1px;background:#c8c8c8"></div>
<div class="t" style="left:1px;top:360px;width:25px;text-align:center;font-size:13.5px;color:#262626">9</div>
<div style="left:1px;top:394px;width:25px;height:1px;background:#c8c8c8"></div>
<div class="t" style="left:1px;top:379px;width:25px;text-align:center;font-size:13.5px;color:#262626">10</div>
<div style="left:1px;top:413px;width:25px;height:1px;background:#c8c8c8"></div>
<div class="t" style="left:1px;top:398px;width:25px;text-align:center;font-size:13.5px;color:#262626">11</div>
<div style="left:1px;top:432px;width:25px;height:1px;background:#c8c8c8"></div>
<div class="t" style="left:1px;top:417px;width:25px;text-align:center;font-size:13.5px;color:#262626">12</div>
<div style="left:1px;top:451px;width:25px;height:1px;background:#c8c8c8"></div>
<div class="t" style="left:1px;top:436px;width:25px;text-align:center;font-size:13.5px;color:#262626">13</div>
<div style="left:1px;top:470px;width:25px;height:1px;background:#c8c8c8"></div>
<div class="t" style="left:1px;top:455px;width:25px;text-align:center;font-size:13.5px;color:#262626">14</div>
<div style="left:1px;top:489px;width:25px;height:1px;background:#c8c8c8"></div>
<div class="t" style="left:1px;top:474px;width:25px;text-align:center;font-size:13.5px;color:#262626">15</div>
<div style="left:1px;top:508px;width:25px;height:1px;background:#c8c8c8"></div>
<div class="t" style="left:1px;top:493px;width:25px;text-align:center;font-size:13.5px;color:#262626">16</div>
<div style="left:1px;top:527px;width:25px;height:1px;background:#c8c8c8"></div>
<div class="t" style="left:1px;top:512px;width:25px;text-align:center;font-size:13.5px;color:#262626">17</div>
<div style="left:1px;top:546px;width:25px;height:1px;background:#c8c8c8"></div>
<div class="t" style="left:1px;top:531px;width:25px;text-align:center;font-size:13.5px;color:#262626">18</div>
<div style="left:1px;top:565px;width:25px;height:1px;background:#c8c8c8"></div>
<div class="t" style="left:1px;top:550px;width:25px;text-align:center;font-size:13.5px;color:#262626">19</div>
<div style="left:1px;top:584px;width:25px;height:1px;background:#c8c8c8"></div>
<div class="t" style="left:1px;top:569px;width:25px;text-align:center;font-size:13.5px;color:#262626">20</div>
<div style="left:1px;top:603px;width:25px;height:1px;background:#c8c8c8"></div>
<div class="t" style="left:1px;top:588px;width:25px;text-align:center;font-size:13.5px;color:#262626">21</div>
<div style="left:1px;top:622px;width:25px;height:1px;background:#c8c8c8"></div>
<div class="t" style="left:1px;top:607px;width:25px;text-align:center;font-size:13.5px;color:#262626">22</div>
<div style="left:1px;top:641px;width:25px;height:1px;background:#c8c8c8"></div>
<div class="t" style="left:1px;top:626px;width:25px;text-align:center;font-size:13.5px;color:#262626">23</div>
<div style="left:1px;top:660px;width:25px;height:1px;background:#c8c8c8"></div>
<div class="t" style="left:1px;top:645px;width:25px;text-align:center;font-size:13.5px;color:#262626">24</div>
<div style="left:1px;top:677px;width:25px;height:1px;background:#c8c8c8"></div>
<div class="t" style="left:1px;top:663px;width:25px;text-align:center;font-size:13.5px;color:#262626">25</div>
<div class="t" style="left:1px;top:680px;width:25px;height:4px;overflow:hidden;text-align:center;font-size:13.5px;color:#262626">26</div>
<div style="left:1px;top:685px;width:796px;height:1px;background:#ababab"></div>
<div style="left:796px;top:218px;width:1px;height:468px;background:#ababab"></div>
<div style="left:235px;top:236px;width:74px;height:424px;background:#e3eaf6"></div>
<div style="left:235px;top:252px;width:74px;height:1px;background:#c9d2e0"></div>
<div style="left:235px;top:269px;width:74px;height:1px;background:#c9d2e0"></div>
<div style="left:235px;top:286px;width:74px;height:1px;background:#c9d2e0"></div>
<div style="left:235px;top:303px;width:74px;height:1px;background:#c9d2e0"></div>
<div style="left:235px;top:320px;width:74px;height:1px;background:#c9d2e0"></div>
<div style="left:235px;top:337px;width:74px;height:1px;background:#c9d2e0"></div>
<div style="left:235px;top:356px;width:74px;height:1px;background:#c9d2e0"></div>
<div style="left:235px;top:375px;width:74px;height:1px;background:#c9d2e0"></div>
<div style="left:235px;top:394px;width:74px;height:1px;background:#c9d2e0"></div>
<div style="left:235px;top:413px;width:74px;height:1px;background:#c9d2e0"></div>
<div style="left:235px;top:432px;width:74px;height:1px;background:#c9d2e0"></div>
<div style="left:235px;top:451px;width:74px;height:1px;background:#c9d2e0"></div>
<div style="left:235px;top:470px;width:74px;height:1px;background:#c9d2e0"></div>
<div style="left:235px;top:489px;width:74px;height:1px;background:#c9d2e0"></div>
<div style="left:235px;top:508px;width:74px;height:1px;background:#c9d2e0"></div>
<div style="left:235px;top:527px;width:74px;height:1px;background:#c9d2e0"></div>
<div style="left:235px;top:546px;width:74px;height:1px;background:#c9d2e0"></div>
<div style="left:235px;top:565px;width:74px;height:1px;background:#c9d2e0"></div>
<div style="left:235px;top:584px;width:74px;height:1px;background:#c9d2e0"></div>
<div style="left:235px;top:603px;width:74px;height:1px;background:#c9d2e0"></div>
<div style="left:235px;top:622px;width:74px;height:1px;background:#c9d2e0"></div>
<div style="left:235px;top:641px;width:74px;height:1px;background:#c9d2e0"></div>
<div class="t" style="left:30px;top:221px;font-size:13px;color:#000;font-weight:bold;letter-spacing:1px;">问题汇总</div>
<div class="t" style="left:152px;top:221px;width:81px;text-align:right;font-size:13px;color:#000;font-weight:bold;">6月</div>
<div class="t" style="left:226px;top:221px;width:81px;text-align:right;font-size:13px;color:#000;font-weight:bold;">7月</div>
<div class="t" style="left:30px;top:238px;font-size:13px;color:#000;">咨询其他<span style='margin:0 1.5px 0 1px'>/</span>无相关</div>
<div class="t" style="left:150px;top:238px;width:81px;text-align:right;font-size:13px;color:#ff0000;">14.99%</div>
<div class="t" style="left:226px;top:238px;width:81px;text-align:right;font-size:13px;color:#ff0000;">6.02%</div>
<div class="t" style="left:30px;top:255px;font-size:13px;color:#ff0000;">安装前须知</div>
<div class="t" style="left:150px;top:255px;width:81px;text-align:right;font-size:13px;color:#000;">0.00%</div>
<div class="t" style="left:226px;top:255px;width:81px;text-align:right;font-size:13px;color:#000;">4.83%</div>
<div class="t" style="left:30px;top:272px;font-size:13px;color:#000;">10装7</div>
<div class="t" style="left:150px;top:272px;width:81px;text-align:right;font-size:13px;color:#000;">1.84%</div>
<div class="t" style="left:226px;top:272px;width:81px;text-align:right;font-size:13px;color:#000;">1.09%</div>
<div class="t" style="left:30px;top:289px;font-size:13px;color:#000;">bios</div>
<div class="t" style="left:150px;top:289px;width:81px;text-align:right;font-size:13px;color:#000;">1.22%</div>
<div class="t" style="left:226px;top:289px;width:81px;text-align:right;font-size:13px;color:#000;">1.48%</div>
<div class="t" style="left:30px;top:306px;font-size:13px;color:#ff0000;">PE问题</div>
<div class="t" style="left:150px;top:306px;width:81px;text-align:right;font-size:13px;color:#000;">3.83%</div>
<div class="t" style="left:226px;top:306px;width:81px;text-align:right;font-size:13px;color:#000;">3.61%</div>
<div class="t" style="left:30px;top:323px;font-size:13px;color:#000;">PE无法下载</div>
<div class="t" style="left:150px;top:323px;width:81px;text-align:right;font-size:13px;color:#000;">1.05%</div>
<div class="t" style="left:226px;top:323px;width:81px;text-align:right;font-size:13px;color:#000;">0.93%</div>
<div class="t" style="left:30px;top:342px;font-size:13px;color:#000;">U盘问题</div>
<div class="t" style="left:150px;top:342px;width:81px;text-align:right;font-size:14.5px;color:#000;">1.72%</div>
<div class="t" style="left:226px;top:342px;width:81px;text-align:right;font-size:13px;color:#000;">1.30%</div>
<div class="t" style="left:30px;top:361px;font-size:13px;color:#000;">U盘制作教程</div>
<div class="t" style="left:150px;top:361px;width:81px;text-align:right;font-size:14.5px;color:#000;">4.61%</div>
<div class="t" style="left:226px;top:361px;width:81px;text-align:right;font-size:13px;color:#000;">3.71%</div>
<div class="t" style="left:30px;top:380px;font-size:13px;color:#000;">安装后常见问题</div>
<div class="t" style="left:150px;top:380px;width:81px;text-align:right;font-size:14.5px;color:#000;">3.85%</div>
<div class="t" style="left:226px;top:380px;width:81px;text-align:right;font-size:13px;color:#000;">4.37%</div>
<div class="t" style="left:30px;top:399px;font-size:13px;color:#000;">安装后卡在开机界面</div>
<div class="t" style="left:150px;top:399px;width:81px;text-align:right;font-size:14.5px;color:#000;">2.54%</div>
<div class="t" style="left:226px;top:399px;width:81px;text-align:right;font-size:13px;color:#000;">1.98%</div>
<div class="t" style="left:30px;top:418px;font-size:13px;color:#000;">安装教程</div>
<div class="t" style="left:150px;top:418px;width:81px;text-align:right;font-size:14.5px;color:#000;">12.82%</div>
<div class="t" style="left:226px;top:418px;width:81px;text-align:right;font-size:13px;color:#000;">12.31%</div>
<div class="t" style="left:30px;top:437px;font-size:13px;color:#000;">安装中常见问题</div>
<div class="t" style="left:150px;top:437px;width:81px;text-align:right;font-size:14.5px;color:#000;">5.46%</div>
<div class="t" style="left:226px;top:437px;width:81px;text-align:right;font-size:13px;color:#000;">5.28%</div>
<div class="t" style="left:30px;top:456px;font-size:13px;color:#000;">备份问题</div>
<div class="t" style="left:150px;top:456px;width:81px;text-align:right;font-size:14.5px;color:#000;">1.30%</div>
<div class="t" style="left:226px;top:456px;width:81px;text-align:right;font-size:13px;color:#000;">1.67%</div>
<div class="t" style="left:30px;top:475px;font-size:13px;color:#000;">分区问题</div>
<div class="t" style="left:150px;top:475px;width:81px;text-align:right;font-size:14.5px;color:#000;">4.47%</div>
<div class="t" style="left:226px;top:475px;width:81px;text-align:right;font-size:13px;color:#000;">4.06%</div>
<div class="t" style="left:30px;top:494px;font-size:13px;color:#000;">黑屏</div>
<div class="t" style="left:150px;top:494px;width:81px;text-align:right;font-size:14.5px;color:#000;">10.30%</div>
<div class="t" style="left:226px;top:494px;width:81px;text-align:right;font-size:13px;color:#000;">12.03%</div>
<div class="t" style="left:30px;top:513px;font-size:13px;color:#000;">激活</div>
<div class="t" style="left:150px;top:513px;width:81px;text-align:right;font-size:14.5px;color:#000;">12.38%</div>
<div class="t" style="left:226px;top:513px;width:81px;text-align:right;font-size:13px;color:#000;">15.31%</div>
<div class="t" style="left:30px;top:532px;font-size:13px;color:#000;">开不了机</div>
<div class="t" style="left:150px;top:532px;width:81px;text-align:right;font-size:14.5px;color:#000;">1.88%</div>
<div class="t" style="left:226px;top:532px;width:81px;text-align:right;font-size:13px;color:#000;">2.15%</div>
<div class="t" style="left:30px;top:551px;font-size:13px;color:#000;">开机密码</div>
<div class="t" style="left:150px;top:551px;width:81px;text-align:right;font-size:14.5px;color:#000;">1.18%</div>
<div class="t" style="left:226px;top:551px;width:81px;text-align:right;font-size:13px;color:#000;">0.99%</div>
<div class="t" style="left:30px;top:570px;font-size:13px;color:#000;">开机启动项</div>
<div class="t" style="left:150px;top:570px;width:81px;text-align:right;font-size:14.5px;color:#000;">1.78%</div>
<div class="t" style="left:226px;top:570px;width:81px;text-align:right;font-size:13px;color:#000;">1.40%</div>
<div class="t" style="left:30px;top:589px;font-size:13px;color:#000;">蓝屏</div>
<div class="t" style="left:150px;top:589px;width:81px;text-align:right;font-size:14.5px;color:#000;">2.56%</div>
<div class="t" style="left:226px;top:589px;width:81px;text-align:right;font-size:13px;color:#000;">3.25%</div>
<div class="t" style="left:30px;top:608px;font-size:13px;color:#000;">其他驱动问题</div>
<div class="t" style="left:150px;top:608px;width:81px;text-align:right;font-size:14.5px;color:#000;">1.18%</div>
<div class="t" style="left:226px;top:608px;width:81px;text-align:right;font-size:13px;color:#000;">1.35%</div>
<div class="t" style="left:30px;top:627px;font-size:13px;color:#000;">鼠标键盘驱动问题</div>
<div class="t" style="left:150px;top:627px;width:81px;text-align:right;font-size:14.5px;color:#000;">1.32%</div>
<div class="t" style="left:226px;top:627px;width:81px;text-align:right;font-size:13px;color:#000;">1.59%</div>
<div class="t" style="left:30px;top:646px;font-size:13px;color:#000;">重装后无法上网</div>
<div class="t" style="left:150px;top:646px;width:81px;text-align:right;font-size:14.5px;color:#000;">7.71%</div>
<div class="t" style="left:226px;top:646px;width:81px;text-align:right;font-size:13px;color:#000;">9.28%</div>
<div class="t" style="left:30px;top:663px;font-size:13px;color:#000;font-weight:bold;letter-spacing:1px;">共计：</div>
<div class="t" style="left:150px;top:663px;width:81px;text-align:right;font-size:13px;color:#000;font-weight:bold;"><span style='letter-spacing:0.5px'>5163</span></div>
<div class="t" style="left:226px;top:663px;width:81px;text-align:right;font-size:13px;color:#000;font-weight:bold;">6151</div>
<div style="left:233px;top:234px;width:2px;height:428px;background:#3a6bc9"></div>
<div style="left:309px;top:234px;width:2px;height:428px;background:#3a6bc9"></div>
<div style="left:233px;top:234px;width:78px;height:2px;background:#3a6bc9"></div>
<div style="left:233px;top:660px;width:78px;height:2px;background:#3a6bc9"></div>
<div style="left:232px;top:232px;width:7px;height:7px;background:#3a6bc9;border:1px solid #fff"></div>
<div style="left:306px;top:232px;width:7px;height:7px;background:#3a6bc9;border:1px solid #fff"></div>
<div style="left:232px;top:657px;width:7px;height:7px;background:#3a6bc9;border:1px solid #fff"></div>
<div style="left:306px;top:657px;width:7px;height:7px;background:#3a6bc9;border:1px solid #fff"></div>
<svg style="left:311px;top:236px;overflow:visible" width="480" height="287"><rect x="0" y="0" width="480" height="287" fill="#fff"/><text x="240.0" y="28" text-anchor="middle" font-size="18.5px" fill="#595959" font-family="Liberation Sans, sans-serif">图表标题</text><line x1="56.30000000000001" x2="465.70000000000005" y1="255.5" y2="255.5" stroke="#d9d9d9" stroke-width="1"/><text x="45" y="258.0" text-anchor="end" font-size="11px" fill="#595959" letter-spacing="-0.2" font-family="Liberation Sans, sans-serif">0.00%</text><line x1="56.30000000000001" x2="465.70000000000005" y1="230.5" y2="230.5" stroke="#d9d9d9" stroke-width="1"/><text x="45" y="233.0" text-anchor="end" font-size="11px" fill="#595959" letter-spacing="-0.2" font-family="Liberation Sans, sans-serif">2.00%</text><line x1="56.30000000000001" x2="465.70000000000005" y1="204.5" y2="204.5" stroke="#d9d9d9" stroke-width="1"/><text x="45" y="207.0" text-anchor="end" font-size="11px" fill="#595959" letter-spacing="-0.2" font-family="Liberation Sans, sans-serif">4.00%</text><line x1="56.30000000000001" x2="465.70000000000005" y1="179.5" y2="179.5" stroke="#d9d9d9" stroke-width="1"/><text x="45" y="182.0" text-anchor="end" font-size="11px" fill="#595959" letter-spacing="-0.2" font-family="Liberation Sans, sans-serif">6.00%</text><line x1="56.30000000000001" x2="465.70000000000005" y1="153.5" y2="153.5" stroke="#d9d9d9" stroke-width="1"/><text x="45" y="156.0" text-anchor="end" font-size="11px" fill="#595959" letter-spacing="-0.2" font-family="Liberation Sans, sans-serif">8.00%</text><line x1="56.30000000000001" x2="465.70000000000005" y1="128.5" y2="128.5" stroke="#d9d9d9" stroke-width="1"/><text x="45" y="131.0" text-anchor="end" font-size="11px" fill="#595959" letter-spacing="-0.2" font-family="Liberation Sans, sans-serif">10.00%</text><line x1="56.30000000000001" x2="465.70000000000005" y1="102.5" y2="102.5" stroke="#d9d9d9" stroke-width="1"/><text x="45" y="105.0" text-anchor="end" font-size="11px" fill="#595959" letter-spacing="-0.2" font-family="Liberation Sans, sans-serif">12.00%</text><line x1="56.30000000000001" x2="465.70000000000005" y1="77.5" y2="77.5" stroke="#d9d9d9" stroke-width="1"/><text x="45" y="80.0" text-anchor="end" font-size="11px" fill="#595959" letter-spacing="-0.2" font-family="Liberation Sans, sans-serif">14.00%</text><line x1="56.30000000000001" x2="465.70000000000005" y1="51.5" y2="51.5" stroke="#d9d9d9" stroke-width="1"/><text x="45" y="54.0" text-anchor="end" font-size="11px" fill="#595959" letter-spacing="-0.2" font-family="Liberation Sans, sans-serif">16.00%</text><rect x="62.20" y="64.18" width="6" height="191.12" fill="#5b9bd5"/><text x="65.20" y="274.8" text-anchor="middle" font-size="11px" fill="#595959" font-family="Liberation Sans, sans-serif">1</text><rect x="80.00" y="255.30" width="6" height="0.00" fill="#5b9bd5"/><text x="83.00" y="274.8" text-anchor="middle" font-size="11px" fill="#595959" font-family="Liberation Sans, sans-serif">2</text><rect x="97.80" y="231.84" width="6" height="23.46" fill="#5b9bd5"/><text x="100.80" y="274.8" text-anchor="middle" font-size="11px" fill="#595959" font-family="Liberation Sans, sans-serif">3</text><rect x="115.60" y="239.75" width="6" height="15.55" fill="#5b9bd5"/><text x="118.60" y="274.8" text-anchor="middle" font-size="11px" fill="#595959" font-family="Liberation Sans, sans-serif">4</text><rect x="133.40" y="206.47" width="6" height="48.83" fill="#5b9bd5"/><text x="136.40" y="274.8" text-anchor="middle" font-size="11px" fill="#595959" font-family="Liberation Sans, sans-serif">5</text><rect x="151.20" y="241.91" width="6" height="13.39" fill="#5b9bd5"/><text x="154.20" y="274.8" text-anchor="middle" font-size="11px" fill="#595959" font-family="Liberation Sans, sans-serif">6</text><rect x="169.00" y="233.37" width="6" height="21.93" fill="#5b9bd5"/><text x="172.00" y="274.8" text-anchor="middle" font-size="11px" fill="#595959" font-family="Liberation Sans, sans-serif">7</text><rect x="186.80" y="196.52" width="6" height="58.78" fill="#5b9bd5"/><text x="189.80" y="274.8" text-anchor="middle" font-size="11px" fill="#595959" font-family="Liberation Sans, sans-serif">8</text><rect x="204.60" y="206.21" width="6" height="49.09" fill="#5b9bd5"/><text x="207.60" y="274.8" text-anchor="middle" font-size="11px" fill="#595959" font-family="Liberation Sans, sans-serif">9</text><rect x="222.40" y="222.92" width="6" height="32.38" fill="#5b9bd5"/><text x="225.40" y="274.8" text-anchor="middle" font-size="11px" fill="#595959" font-family="Liberation Sans, sans-serif">10</text><rect x="240.20" y="91.84" width="6" height="163.46" fill="#5b9bd5"/><text x="243.20" y="274.8" text-anchor="middle" font-size="11px" fill="#595959" font-family="Liberation Sans, sans-serif">11</text><rect x="258.00" y="185.69" width="6" height="69.61" fill="#5b9bd5"/><text x="261.00" y="274.8" text-anchor="middle" font-size="11px" fill="#595959" font-family="Liberation Sans, sans-serif">12</text><rect x="275.80" y="238.73" width="6" height="16.57" fill="#5b9bd5"/><text x="278.80" y="274.8" text-anchor="middle" font-size="11px" fill="#595959" font-family="Liberation Sans, sans-serif">13</text><rect x="293.60" y="198.31" width="6" height="56.99" fill="#5b9bd5"/><text x="296.60" y="274.8" text-anchor="middle" font-size="11px" fill="#595959" font-family="Liberation Sans, sans-serif">14</text><rect x="311.40" y="123.97" width="6" height="131.33" fill="#5b9bd5"/><text x="314.40" y="274.8" text-anchor="middle" font-size="11px" fill="#595959" font-family="Liberation Sans, sans-serif">15</text><rect x="329.20" y="97.46" width="6" height="157.84" fill="#5b9bd5"/><text x="332.20" y="274.8" text-anchor="middle" font-size="11px" fill="#595959" font-family="Liberation Sans, sans-serif">16</text><rect x="347.00" y="231.33" width="6" height="23.97" fill="#5b9bd5"/><text x="350.00" y="274.8" text-anchor="middle" font-size="11px" fill="#595959" font-family="Liberation Sans, sans-serif">17</text><rect x="364.80" y="240.26" width="6" height="15.04" fill="#5b9bd5"/><text x="367.80" y="274.8" text-anchor="middle" font-size="11px" fill="#595959" font-family="Liberation Sans, sans-serif">18</text><rect x="382.60" y="232.61" width="6" height="22.70" fill="#5b9bd5"/><text x="385.60" y="274.8" text-anchor="middle" font-size="11px" fill="#595959" font-family="Liberation Sans, sans-serif">19</text><rect x="400.40" y="222.66" width="6" height="32.64" fill="#5b9bd5"/><text x="403.40" y="274.8" text-anchor="middle" font-size="11px" fill="#595959" font-family="Liberation Sans, sans-serif">20</text><rect x="418.20" y="240.26" width="6" height="15.04" fill="#5b9bd5"/><text x="421.20" y="274.8" text-anchor="middle" font-size="11px" fill="#595959" font-family="Liberation Sans, sans-serif">21</text><rect x="436.00" y="238.47" width="6" height="16.83" fill="#5b9bd5"/><text x="439.00" y="274.8" text-anchor="middle" font-size="11px" fill="#595959" font-family="Liberation Sans, sans-serif">22</text><rect x="453.80" y="157.00" width="6" height="98.30" fill="#5b9bd5"/><text x="456.80" y="274.8" text-anchor="middle" font-size="11px" fill="#595959" font-family="Liberation Sans, sans-serif">23</text></svg>
<div style="left:311px;top:235px;width:481px;height:289px;border:1px solid #d9d9d9;border-left:none"></div>
<div style="left:300px;top:340px;width:496px;height:330px;overflow:hidden"><svg style="left:20px;top:24px" width="479" height="287"><rect x="0" y="0" width="479" height="287" fill="#fff"/><text x="239.5" y="28" text-anchor="middle" font-size="18.5px" fill="#595959" font-family="Liberation Sans, sans-serif">图表标题</text><line x1="55" x2="465" y1="256.5" y2="256.5" stroke="#d9d9d9" stroke-width="1"/><text x="44" y="259.0" text-anchor="end" font-size="11px" fill="#595959" letter-spacing="-0.2" font-family="Liberation Sans, sans-serif">0.00%</text><line x1="55" x2="465" y1="233.5" y2="233.5" stroke="#d9d9d9" stroke-width="1"/><text x="44" y="236.0" text-anchor="end" font-size="11px" fill="#595959" letter-spacing="-0.2" font-family="Liberation Sans, sans-serif">2.00%</text><line x1="55" x2="465" y1="210.5" y2="210.5" stroke="#d9d9d9" stroke-width="1"/><text x="44" y="213.0" text-anchor="end" font-size="11px" fill="#595959" letter-spacing="-0.2" font-family="Liberation Sans, sans-serif">4.00%</text><line x1="55" x2="465" y1="188.5" y2="188.5" stroke="#d9d9d9" stroke-width="1"/><text x="44" y="191.0" text-anchor="end" font-size="11px" fill="#595959" letter-spacing="-0.2" font-family="Liberation Sans, sans-serif">6.00%</text><line x1="55" x2="465" y1="165.5" y2="165.5" stroke="#d9d9d9" stroke-width="1"/><text x="44" y="168.0" text-anchor="end" font-size="11px" fill="#595959" letter-spacing="-0.2" font-family="Liberation Sans, sans-serif">8.00%</text><line x1="55" x2="465" y1="142.5" y2="142.5" stroke="#d9d9d9" stroke-width="1"/><text x="44" y="145.0" text-anchor="end" font-size="11px" fill="#595959" letter-spacing="-0.2" font-family="Liberation Sans, sans-serif">10.00%</text><line x1="55" x2="465" y1="119.5" y2="119.5" stroke="#d9d9d9" stroke-width="1"/><text x="44" y="122.0" text-anchor="end" font-size="11px" fill="#595959" letter-spacing="-0.2" font-family="Liberation Sans, sans-serif">12.00%</text><line x1="55" x2="465" y1="97.5" y2="97.5" stroke="#d9d9d9" stroke-width="1"/><text x="44" y="100.0" text-anchor="end" font-size="11px" fill="#595959" letter-spacing="-0.2" font-family="Liberation Sans, sans-serif">14.00%</text><line x1="55" x2="465" y1="74.5" y2="74.5" stroke="#d9d9d9" stroke-width="1"/><text x="44" y="77.0" text-anchor="end" font-size="11px" fill="#595959" letter-spacing="-0.2" font-family="Liberation Sans, sans-serif">16.00%</text><line x1="55" x2="465" y1="51.5" y2="51.5" stroke="#d9d9d9" stroke-width="1"/><text x="44" y="54.0" text-anchor="end" font-size="11px" fill="#595959" letter-spacing="-0.2" font-family="Liberation Sans, sans-serif">18.00%</text><rect x="60.91" y="187.44" width="6" height="68.56" fill="#5b9bd5"/><text x="63.91" y="275.5" text-anchor="middle" font-size="11px" fill="#595959" font-family="Liberation Sans, sans-serif">1</text><rect x="78.74" y="200.99" width="6" height="55.01" fill="#5b9bd5"/><text x="81.74" y="275.5" text-anchor="middle" font-size="11px" fill="#595959" font-family="Liberation Sans, sans-serif">2</text><rect x="96.57" y="243.59" width="6" height="12.41" fill="#5b9bd5"/><text x="99.57" y="275.5" text-anchor="middle" font-size="11px" fill="#595959" font-family="Liberation Sans, sans-serif">3</text><rect x="114.39" y="239.14" width="6" height="16.86" fill="#5b9bd5"/><text x="117.39" y="275.5" text-anchor="middle" font-size="11px" fill="#595959" font-family="Liberation Sans, sans-serif">4</text><rect x="132.22" y="214.89" width="6" height="41.11" fill="#5b9bd5"/><text x="135.22" y="275.5" text-anchor="middle" font-size="11px" fill="#595959" font-family="Liberation Sans, sans-serif">5</text><rect x="150.04" y="245.41" width="6" height="10.59" fill="#5b9bd5"/><text x="153.04" y="275.5" text-anchor="middle" font-size="11px" fill="#595959" font-family="Liberation Sans, sans-serif">6</text><rect x="167.87" y="241.19" width="6" height="14.81" fill="#5b9bd5"/><text x="170.87" y="275.5" text-anchor="middle" font-size="11px" fill="#595959" font-family="Liberation Sans, sans-serif">7</text><rect x="185.70" y="213.75" width="6" height="42.25" fill="#5b9bd5"/><text x="188.70" y="275.5" text-anchor="middle" font-size="11px" fill="#595959" font-family="Liberation Sans, sans-serif">8</text><rect x="203.52" y="206.23" width="6" height="49.77" fill="#5b9bd5"/><text x="206.52" y="275.5" text-anchor="middle" font-size="11px" fill="#595959" font-family="Liberation Sans, sans-serif">9</text><rect x="221.35" y="233.45" width="6" height="22.55" fill="#5b9bd5"/><text x="224.35" y="275.5" text-anchor="middle" font-size="11px" fill="#595959" font-family="Liberation Sans, sans-serif">10</text><rect x="239.17" y="115.80" width="6" height="140.20" fill="#5b9bd5"/><text x="242.17" y="275.5" text-anchor="middle" font-size="11px" fill="#595959" font-family="Liberation Sans, sans-serif">11</text><rect x="257.00" y="195.87" width="6" height="60.13" fill="#5b9bd5"/><text x="260.00" y="275.5" text-anchor="middle" font-size="11px" fill="#595959" font-family="Liberation Sans, sans-serif">12</text><rect x="274.83" y="236.98" width="6" height="19.02" fill="#5b9bd5"/><text x="277.83" y="275.5" text-anchor="middle" font-size="11px" fill="#595959" font-family="Liberation Sans, sans-serif">13</text><rect x="292.65" y="209.76" width="6" height="46.24" fill="#5b9bd5"/><text x="295.65" y="275.5" text-anchor="middle" font-size="11px" fill="#595959" font-family="Liberation Sans, sans-serif">14</text><rect x="310.48" y="118.99" width="6" height="137.01" fill="#5b9bd5"/><text x="313.48" y="275.5" text-anchor="middle" font-size="11px" fill="#595959" font-family="Liberation Sans, sans-serif">15</text><rect x="328.30" y="81.64" width="6" height="174.36" fill="#5b9bd5"/><text x="331.30" y="275.5" text-anchor="middle" font-size="11px" fill="#595959" font-family="Liberation Sans, sans-serif">16</text><rect x="346.13" y="231.51" width="6" height="24.49" fill="#5b9bd5"/><text x="349.13" y="275.5" text-anchor="middle" font-size="11px" fill="#595959" font-family="Liberation Sans, sans-serif">17</text><rect x="363.96" y="244.72" width="6" height="11.28" fill="#5b9bd5"/><text x="366.96" y="275.5" text-anchor="middle" font-size="11px" fill="#595959" font-family="Liberation Sans, sans-serif">18</text><rect x="381.78" y="240.06" width="6" height="15.94" fill="#5b9bd5"/><text x="384.78" y="275.5" text-anchor="middle" font-size="11px" fill="#595959" font-family="Liberation Sans, sans-serif">19</text><rect x="399.61" y="218.99" width="6" height="37.01" fill="#5b9bd5"/><text x="402.61" y="275.5" text-anchor="middle" font-size="11px" fill="#595959" font-family="Liberation Sans, sans-serif">20</text><rect x="417.43" y="240.62" width="6" height="15.38" fill="#5b9bd5"/><text x="420.43" y="275.5" text-anchor="middle" font-size="11px" fill="#595959" font-family="Liberation Sans, sans-serif">21</text><rect x="435.26" y="237.89" width="6" height="18.11" fill="#5b9bd5"/><text x="438.26" y="275.5" text-anchor="middle" font-size="11px" fill="#595959" font-family="Liberation Sans, sans-serif">22</text><rect x="453.09" y="150.31" width="6" height="105.69" fill="#5b9bd5"/><text x="456.09" y="275.5" text-anchor="middle" font-size="11px" fill="#595959" font-family="Liberation Sans, sans-serif">23</text></svg><svg style="left:0;top:0" width="510" height="330"><rect x="20.5" y="24.5" width="478" height="287" fill="none" stroke="#8d8d8d" stroke-width="1.3"/><circle cx="20.5" cy="24.5" r="4.8" fill="#fff" stroke="#8d8d8d" stroke-width="1.5"/><circle cx="259.5" cy="24.5" r="4.8" fill="#fff" stroke="#8d8d8d" stroke-width="1.5"/><circle cx="498.5" cy="24.5" r="4.8" fill="#fff" stroke="#8d8d8d" stroke-width="1.5"/><circle cx="20.5" cy="167.5" r="4.8" fill="#fff" stroke="#8d8d8d" stroke-width="1.5"/><circle cx="498.5" cy="167.5" r="4.8" fill="#fff" stroke="#8d8d8d" stroke-width="1.5"/><circle cx="20.5" cy="311.5" r="4.8" fill="#fff" stroke="#8d8d8d" stroke-width="1.5"/><circle cx="259.5" cy="311.5" r="4.8" fill="#fff" stroke="#8d8d8d" stroke-width="1.5"/><circle cx="498.5" cy="311.5" r="4.8" fill="#fff" stroke="#8d8d8d" stroke-width="1.5"/></svg></div>
<div style="left:796px;top:218px;width:1px;height:468px;background:#ababab"></div>
<svg style="left:797px;top:202px" width="22" height="484"><rect x="0" y="0" width="21" height="484" fill="#e6e6e6"/><rect x="3.5" y="2.5" width="14" height="14" fill="#fff" stroke="#ababab"/><polygon points="7,12 14,12 10.5,8" fill="#777"/><rect x="3" y="17" width="15" height="360" fill="#d4d4d4"/><rect x="3.5" y="17.5" width="14" height="360" fill="#fff" stroke="#ababab"/><rect x="3" y="378" width="15" height="91" fill="#d4d4d4"/><rect x="3.5" y="469.5" width="14" height="14" fill="#fff" stroke="#ababab"/><polygon points="7,474 14,474 10.5,478" fill="#777"/></svg>
<div style="left:1px;top:686px;width:817px;height:27px;background:#e6e6e6"></div>
<div style="left:1px;top:713px;width:817px;height:1px;background:#c6c6c6"></div>
<svg style="left:0;top:680px" width="819" height="56"><polygon points="32.5,14.5 32.5,22 28,18.25" fill="#c4c4c4"/><polygon points="57,14.5 57,22 61.5,18.25" fill="#217346"/><rect x="101" y="5" width="13" height="25" fill="#fff"/><line x1="100.5" x2="100.5" y1="5" y2="30" stroke="#ababab"/><line x1="113.5" x2="113.5" y1="5" y2="30" stroke="#ababab"/><rect x="101" y="28" width="12" height="2" fill="#217346"/><rect x="122" y="19.5" width="2.3" height="2.3" fill="#217346"/><rect x="126" y="19.5" width="2.3" height="2.3" fill="#217346"/><rect x="130" y="19.5" width="2.3" height="2.3" fill="#217346"/><circle cx="154" cy="19.7" r="7.5" fill="none" stroke="#8a8a8a" stroke-width="1.3"/><path d="M154 15.5 V24 M149.8 19.7 H158.2" stroke="#7a7a7a" stroke-width="1.6"/><rect x="182" y="13.8" width="2" height="2" fill="#b5b5b5"/><rect x="182" y="18" width="2" height="2" fill="#b5b5b5"/><rect x="182" y="22.2" width="2" height="2" fill="#b5b5b5"/><rect x="199" y="12" width="598" height="15" fill="#d4d4d4"/><rect x="199.5" y="12.5" width="14" height="14" fill="#fff" stroke="#ababab"/><polygon points="204,19.5 208,15.5 208,23.5" fill="#777"/><rect x="214.5" y="12.5" width="471.5" height="14" fill="#fff" stroke="#ababab"/><rect x="782.5" y="12.5" width="14" height="14" fill="#fff" stroke="#ababab"/><polygon points="787.5,15.5 791.5,19.5 787.5,23.5" fill="#777"/><rect x="1" y="34" width="817" height="21" fill="#f1f1f1"/><rect x="510" y="34" width="38" height="21" fill="#c6c6c6"/><rect x="521.5" y="37.5" width="13" height="12" fill="none" stroke="#666"/><line x1="525.5" x2="525.5" y1="37.5" y2="49.5" stroke="#666"/><line x1="530.5" x2="530.5" y1="37.5" y2="49.5" stroke="#666"/><line x1="521.5" x2="534.5" y1="41.5" y2="41.5" stroke="#666"/><line x1="521.5" x2="534.5" y1="45.5" y2="45.5" stroke="#666"/><rect x="559.5" y="37.5" width="14" height="12" fill="none" stroke="#666"/><rect x="562.5" y="40.5" width="8" height="6" fill="none" stroke="#666"/><line x1="564" x2="569" y1="42.5" y2="42.5" stroke="#666"/><line x1="564" x2="569" y1="44.5" y2="44.5" stroke="#666"/><path d="M597.5 49.5 V37.5 H611.5 V49.5" fill="none" stroke="#666"/><path d="M603.5 37.5 V44.5 H611.5" fill="none" stroke="#666"/><rect x="628.5" y="43" width="6.5" height="1.6" fill="#444"/><line x1="639" x2="738" y1="43.5" y2="43.5" stroke="#a0a0a0"/><rect x="687" y="37.5" width="4" height="11" fill="#555"/><path d="M742.5 43.8 H751 M746.8 39.5 V48" stroke="#444" stroke-width="1.6"/></svg>
<div class="t" style="left:8px;top:717.5px;font-size:12px;color:#555">就绪</div>
<div class="t" style="left:256px;top:718px;font-size:12px;color:#444">平均值: 4.35%</div>
<div class="t" style="left:350px;top:718px;font-size:12px;color:#444">计数: 23</div>
<div class="t" style="left:411px;top:718px;font-size:12px;color:#444">求和: 100.00%</div>
<div class="t" style="left:766px;top:718px;font-size:12.5px;color:#444">100%</div>
<div style="left:0px;top:0px;width:1px;height:736px;background:#217346"></div>
<div style="left:818px;top:0px;width:1px;height:736px;background:#217346"></div>
<div style="left:0px;top:735px;width:819px;height:1px;background:#217346"></div>
</body></html>
